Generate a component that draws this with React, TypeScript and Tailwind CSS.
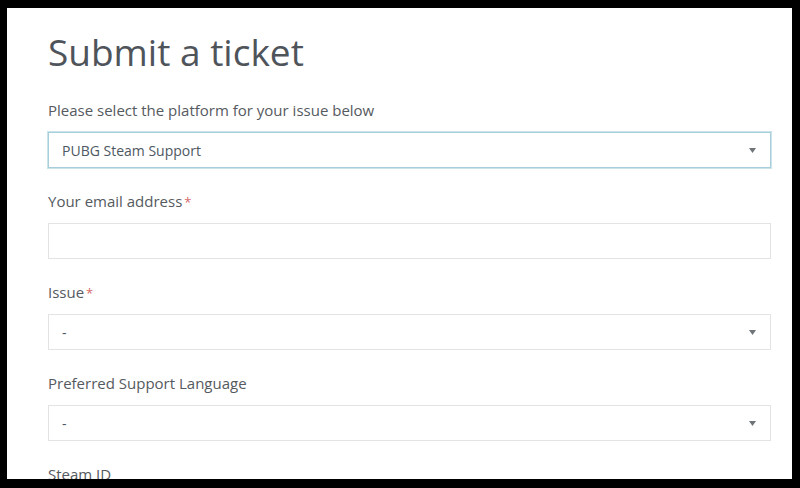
import React from 'react';

const FONT = { fontFamily: '"Open Sans", "Noto Sans", sans-serif' };

function Caret() {
  return (
    <svg width="7" height="5" viewBox="0 0 7 5" className="shrink-0">
      <path d="M0 0 L7 0 L3.5 5 Z" fill="#6f7479" />
    </svg>
  );
}

function Label({ text, required }: { text: string; required?: boolean }) {
  return (
    <label className="block h-5 text-[15px] leading-5 text-[#555a60]">
      {text}
      {required && <span className="ml-[2px] text-[13px] text-[#d46a6a]">*</span>}
    </label>
  );
}

function SelectBox({ value, focused }: { value: string; focused?: boolean }) {
  return (
    <div
      className={`flex h-9 items-center justify-between border bg-white pl-[13px] pr-[14px] text-[14px] text-[#4d5862] ${
        focused ? 'border-[#a7cfdb] ring-1 ring-[#cde3ea]' : 'border-[#e3e3e3]'
      }`}
    >
      <span>{value}</span>
      <Caret />
    </div>
  );
}

export default function App() {
  return (
    <div className="h-[488px] w-[800px] overflow-hidden bg-black pb-[9px] pl-[7px] pr-[8px] pt-[8px]" style={FONT}>
      <div className="h-full overflow-hidden bg-white pl-[41px] pr-[21px] pt-[21px]">
        <h1 className="text-[37px] font-normal leading-[45px] text-[#4f545b]">Submit a ticket</h1>

        <div className="mt-[26px]">
          <Label text="Please select the platform for your issue below" />
          <div className="mt-3">
            <SelectBox value="PUBG Steam Support" focused />
          </div>
        </div>

        <div className="mt-[23px]">
          <Label text="Your email address" required />
          <input className="mt-3 block h-9 w-full border border-[#e3e3e3] bg-white px-[13px] text-[14px] outline-none" />
        </div>

        <div className="mt-[23px]">
          <Label text="Issue" required />
          <div className="mt-3">
            <SelectBox value="-" />
          </div>
        </div>

        <div className="mt-[23px]">
          <Label text="Preferred Support Language" />
          <div className="mt-3">
            <SelectBox value="-" />
          </div>
        </div>

        <div className="mt-[23px]">
          <Label text="Steam ID" />
        </div>
      </div>
    </div>
  );
}
